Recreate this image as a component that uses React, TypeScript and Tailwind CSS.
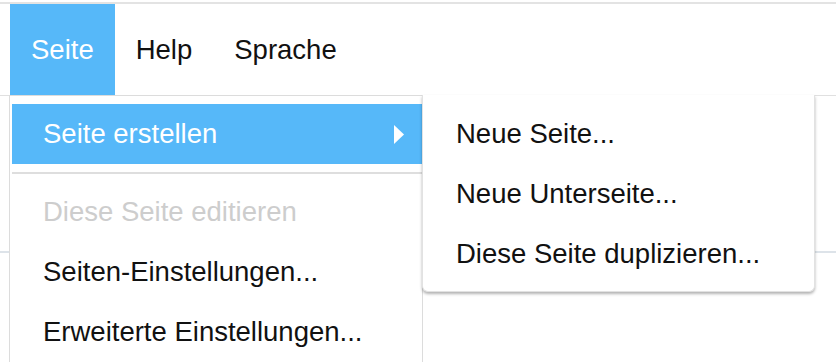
import React from "react";

const MenuBar = () => {
  const items = ["Seite", "Help", "Sprache"];
  return (
    <div className="flex h-[92px] pl-[10px] border-b border-[#e0e0e0]">
      {items.map((item, i) => (
        <div
          key={item}
          className={`flex items-center px-[21px] ${
            i === 0 ? "bg-[#56b8f9] text-white" : "text-[#111]"
          }`}
        >
          {item}
        </div>
      ))}
    </div>
  );
};

const App = () => {
  const mainItems = [
    { label: "Diese Seite editieren", disabled: true },
    { label: "Seiten-Einstellungen...", disabled: false },
    { label: "Erweiterte Einstellungen...", disabled: false },
  ];
  const subItems = ["Neue Seite...", "Neue Unterseite...", "Diese Seite duplizieren..."];

  return (
    <div
      className="relative w-[836px] h-[362px] overflow-hidden bg-white text-[27.5px] leading-none"
      style={{ fontFamily: '"Liberation Sans", Arial, Helvetica, sans-serif' }}
    >
      {/* top rule */}
      <div className="mt-[2px] h-[2px] bg-[#e3e3e3]" />

      <MenuBar />

      {/* page content behind the menus */}
      <div className="h-[157px] border-b-2 border-[#dde3e9]" />

      {/* Dropdown */}
      <div className="absolute left-[9px] top-[95px] w-[414px] h-[280px] bg-white border border-[#dcdcdc] pl-[2px] pt-[8px]">
        <div className="flex items-center justify-between h-[60px] pl-[31px] pr-[18px] bg-[#56b8f9] text-white">
          <span>Seite erstellen</span>
          <svg width="10" height="19" viewBox="0 0 10 19">
            <polygon points="0,0 10,9.5 0,19" fill="#fff" />
          </svg>
        </div>
        <div className="mt-[8px] mb-[8px] h-[2px] bg-[#dedede]" />
        {mainItems.map((item) => (
          <div
            key={item.label}
            className={`flex items-center h-[60px] pl-[31px] ${
              item.disabled ? "text-[#cdcdcd]" : "text-[#111]"
            }`}
          >
            {item.label}
          </div>
        ))}
      </div>

      {/* Submenu */}
      <div className="absolute left-[422px] top-[95px] w-[393px] h-[197px] bg-white border border-t-0 border-[#e2e2e2] rounded-b-[6px] shadow-[0_2px_3px_rgba(0,0,0,0.3)] pt-[9px]">
        {subItems.map((item) => (
          <div key={item} className="flex items-center h-[60px] pl-[33px] text-[#111]">
            {item}
          </div>
        ))}
      </div>
    </div>
  );
};

export default App;
